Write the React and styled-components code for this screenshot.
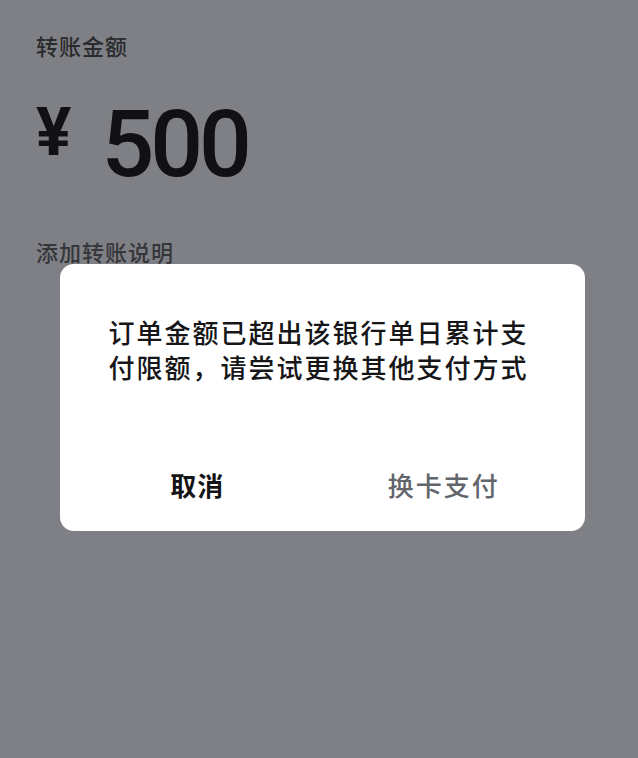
import React from "react";
import styled, { createGlobalStyle } from "styled-components";

const GlobalStyle = createGlobalStyle`
  html, body {
    margin: 0;
    padding: 0;
    background: #7f8085;
  }
  body {
    width: 638px;
    height: 758px;
    overflow: hidden;
    font-family: "Noto Sans CJK SC", "Noto Sans", sans-serif;
  }
`;

const App = () => {
  return (
    <>
      <GlobalStyle />
      <Page>
        <Label>转账金额</Label>
        <AmountRow>
          <Currency>¥</Currency>
          <Amount>500</Amount>
        </AmountRow>
        <Label $hint>添加转账说明</Label>
      </Page>

      <Overlay>
        <Dialog>
          <Message>
            订单金额已超出该银行单日累计支
            <br />
            付限额，请尝试更换其他支付方式
          </Message>
          <Actions>
            <ActionButton $primary>取消</ActionButton>
            <ActionButton>换卡支付</ActionButton>
          </Actions>
        </Dialog>
      </Overlay>
    </>
  );
};

const Page = styled.div`
  display: flex;
  flex-direction: column;
  padding: 30px 36px 0;
`;

const Label = styled.div`
  font-size: 22px;
  line-height: 30px;
  letter-spacing: 1px;
  font-weight: 500;
  color: ${(p) => (p.$hint ? "#35363a" : "#2a2b2e")};
  margin-top: ${(p) => (p.$hint ? "46px" : "0")};
`;

const AmountRow = styled.div`
  display: flex;
  align-items: flex-start;
  gap: 30px;
  margin-top: 40px;
  color: #111113;
`;

const Currency = styled.span`
  font-family: Roboto, "Liberation Sans", sans-serif;
  font-size: 66px;
  font-weight: 700;
  line-height: 66px;
`;

const Amount = styled.span`
  font-family: Roboto, "Liberation Sans", sans-serif;
  font-size: 93px;
  font-weight: 500;
  line-height: 90px;
  letter-spacing: -4px;
`;

const Overlay = styled.div`
  position: fixed;
  inset: 0;
  display: flex;
  align-items: flex-start;
  padding: 264px 53px 0 60px;
`;

const Dialog = styled.div`
  width: 100%;
  background: #ffffff;
  border-radius: 14px;
  display: flex;
  flex-direction: column;
  padding: 50px 0 17px;
`;

const Message = styled.p`
  margin: 0;
  padding: 0 41px 0 33px;
  text-align: center;
  font-size: 26px;
  font-weight: 500;
  line-height: 35px;
  letter-spacing: 2px;
  color: #161618;
`;

const Actions = styled.div`
  display: flex;
  margin-top: 70px;
  padding: 0 18px 0 14px;
`;

const ActionButton = styled.button`
  flex: 1;
  height: 60px;
  border: none;
  background: transparent;
  font-family: "Noto Sans CJK SC", "Noto Sans", sans-serif;
  font-size: 26px;
  letter-spacing: ${(p) => (p.$primary ? "1px" : "2px")};
  font-weight: ${(p) => (p.$primary ? 700 : 500)};
  color: ${(p) => (p.$primary ? "#141416" : "#62656b")};
  padding: 0;
`;

export default App;
